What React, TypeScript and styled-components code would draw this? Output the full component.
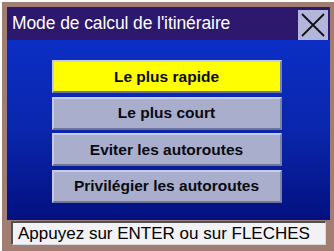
import styled, { createGlobalStyle } from "styled-components";

const GlobalStyle = createGlobalStyle`
  html, body {
    margin: 0;
    padding: 0;
    background: #ffffff;
  }
  * {
    box-sizing: border-box;
  }
`;

const options = [
  "Le plus rapide",
  "Le plus court",
  "Eviter les autoroutes",
  "Privilégier les autoroutes",
];

function App() {
  return (
    <>
      <GlobalStyle />
      <Screen>
        <Frame>
          <TitleBar>
            <Title>Mode de calcul de l'itinéraire</Title>
            <CloseButton>
              <svg width="26" height="26" viewBox="0 0 26 26">
                <path d="M2 2 L24 24 M24 2 L2 24" stroke="#101018" strokeWidth="1.8" />
              </svg>
            </CloseButton>
          </TitleBar>
          <Body>
            {options.map((option, index) => (
              <Option key={option} $active={index === 0}>
                {option}
              </Option>
            ))}
          </Body>
          <StatusBar>Appuyez sur ENTER ou sur FLECHES</StatusBar>
        </Frame>
      </Screen>
    </>
  );
}

export default App;

const Screen = styled.div`
  width: 334px;
  height: 251px;
  padding: 2px 0 0 2px;
  background: #ffffff;
`;

const Frame = styled.div`
  height: 249px;
  display: flex;
  flex-direction: column;
  background: #a27e72;
  padding: 5px 4px 6px 5px;
  font-family: "Liberation Sans", Arial, sans-serif;
`;

const TitleBar = styled.div`
  height: 33px;
  display: flex;
  align-items: flex-start;
  justify-content: space-between;
  background: #2c186c;
  padding: 0 2px 0 5px;
`;

const Title = styled.div`
  color: #ffffff;
  font-size: 17.5px;
  line-height: 33px;
  letter-spacing: -0.1px;
`;

const CloseButton = styled.div`
  width: 30px;
  height: 30px;
  margin-top: 3px;
  display: flex;
  align-items: center;
  justify-content: center;
  background: #b3b6da;
`;

const Body = styled.div`
  flex: 1;
  display: flex;
  flex-direction: column;
  align-items: center;
  gap: 3.5px;
  padding-top: 20px;
  padding-right: 4px;
  background: linear-gradient(180deg, #0b2ec4 0%, #0a26ac 50%, #031080 100%);
`;

const Option = styled.div<{ $active?: boolean }>`
  width: 230px;
  height: 33px;
  flex-shrink: 0;
  display: flex;
  align-items: center;
  justify-content: center;
  font-size: 15.5px;
  font-weight: bold;
  color: #0a0a12;
  background: ${(p) => (p.$active ? "#ffff00" : "#a8aecb")};
  border-top: 2px solid #c9cce6;
  border-left: 2px solid #c4c8e2;
  border-right: 2px solid #7c82a8;
  border-bottom: 2px solid #6e7498;
`;

const StatusBar = styled.div`
  height: 24px;
  flex-shrink: 0;
  margin: 1px 4px 0 4px;
  padding-left: 5px;
  display: flex;
  align-items: center;
  font-size: 17px;
  color: #000000;
  background: #f2f2f6;
  border-top: 2px solid #505058;
  border-left: 2px solid #505058;
  border-right: 1px solid #d8d8e0;
  border-bottom: 1px solid #d8d8e0;
  white-space: nowrap;
`;
